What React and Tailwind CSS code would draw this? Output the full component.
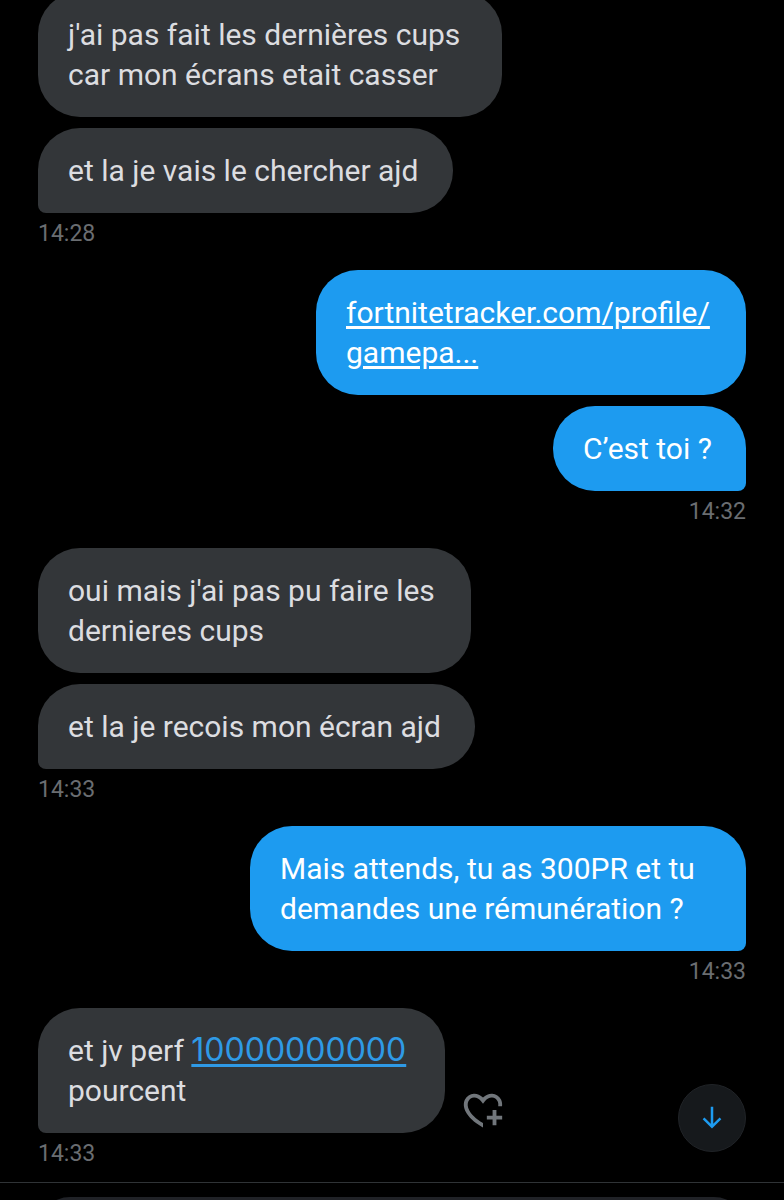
import React from "react";

const groups = [
  {
    mine: false,
    time: "14:28",
    bubbles: [
      { width: "w-[464px]", content: "j'ai pas fait les dernières cups car mon écrans etait casser" },
      { width: "w-[415px]", content: "et la je vais le chercher ajd" },
    ],
  },
  {
    mine: true,
    time: "14:32",
    bubbles: [
      {
        width: "w-[430px]",
        content: (
          <a href="#profile" className="underline decoration-[3px] underline-offset-3">
            fortnitetracker.com/profile/
            <wbr />
            gamepa...
          </a>
        ),
      },
      { width: "w-[193px]", content: "C’est toi ?" },
    ],
  },
  {
    mine: false,
    time: "14:33",
    bubbles: [
      { width: "w-[433px]", content: "oui mais j'ai pas pu faire les dernieres cups" },
      { width: "w-[437px]", content: "et la je recois mon écran ajd" },
    ],
  },
  {
    mine: true,
    time: "14:33",
    bubbles: [
      { width: "w-[496px]", content: "Mais attends, tu as 300PR et tu demandes une rémunération ?" },
    ],
  },
  {
    mine: false,
    time: "14:33",
    bubbles: [
      {
        width: "w-[407px]",
        reactable: true,
        content: (
          <>
            et jv perf{" "}
            <a
              href="#number"
              className="font-['Inter',sans-serif] text-[32px] leading-none text-[#2f9ae6] underline decoration-[3px] underline-offset-3"
            >
              10000000000
            </a>{" "}
            pourcent
          </>
        ),
      },
    ],
  },
];

function HeartPlusIcon() {
  return (
    <svg viewBox="0 0 24 24" className="size-[46px]" fill="currentColor" aria-hidden="true">
      <path d="M17 12v3h-2.998v2h3v3h2v-3h3v-2h-3.001v-3H17zm-5 6.839c-3.871-2.34-6.053-4.639-7.127-6.609-1.112-2.04-1.031-3.7-.479-4.82.561-1.13 1.667-1.84 2.91-1.91 1.222-.06 2.68.51 3.892 2.16l.806 1.09.805-1.09c1.211-1.65 2.668-2.22 3.89-2.16 1.242.07 2.347.78 2.908 1.91.334.677.49 1.554.321 2.59h2.011c.153-1.283-.039-2.469-.539-3.48-.887-1.79-2.647-2.91-4.601-3.01-1.65-.09-3.367.56-4.796 2.01-1.43-1.45-3.147-2.1-4.798-2.01-1.954.1-3.714 1.22-4.601 3.01-.896 1.81-.846 4.17.514 6.67 1.353 2.48 4.003 5.12 8.382 7.67l.502.299v-2.32z" />
    </svg>
  );
}

function ArrowDownIcon() {
  return (
    <svg viewBox="0 0 24 24" className="size-[30px]" fill="currentColor" aria-hidden="true">
      <path d="M13 3v13.59l5.043-5.05 1.414 1.42L12 20.41l-7.457-7.45 1.414-1.42L11 16.59V3h2z" />
    </svg>
  );
}

function Bubble({ mine, last, width, reactable, content }) {
  const tone = mine ? "bg-[#1d9bf0] text-white" : "bg-[#333639] text-[#dcdde0]";
  const tail = last ? (mine ? "rounded-br-lg" : "rounded-bl-lg") : "";
  return (
    <div className="flex max-w-full items-end gap-[15px]">
      <p
        className={`max-w-full rounded-[42px] px-[30px] pt-[23px] pb-[22px] text-[30px] leading-[40px] ${width} ${tone} ${tail}`}
      >
        {content}
      </p>
      {reactable && (
        <button type="button" aria-label="Ajouter une réaction" className="shrink-0 text-[#71767b]">
          <HeartPlusIcon />
        </button>
      )}
    </div>
  );
}

function Group({ mine, time, bubbles }) {
  return (
    <section className={`flex flex-col ${mine ? "items-end" : "items-start"}`}>
      <div className={`flex max-w-full flex-col gap-[11px] ${mine ? "items-end" : "items-start"}`}>
        {bubbles.map((b, i) => (
          <Bubble key={i} mine={mine} last={i === bubbles.length - 1} {...b} />
        ))}
      </div>
      <time className="pt-[7px] text-[23px] leading-[28px] text-[#6a6d71]">{time}</time>
    </section>
  );
}

export default function App() {
  return (
    <div className="flex h-screen flex-col overflow-hidden bg-black font-['Roboto',sans-serif]">
      <div className="relative flex min-h-0 flex-1 flex-col">
        <main className="flex min-h-0 flex-1 flex-col justify-end gap-[22px] overflow-hidden px-[38px] pb-[14px]">
          {groups.map((g, i) => (
            <Group key={i} {...g} />
          ))}
        </main>
        <button
          type="button"
          aria-label="Aller au dernier message"
          className="absolute right-[38px] bottom-[30px] flex size-[68px] items-center justify-center rounded-full border border-[#202327] bg-[#16191c] text-[#1d9bf0]"
        >
          <ArrowDownIcon />
        </button>
      </div>
      <footer className="h-[18px] shrink-0 overflow-hidden border-t border-[#2f3336] px-[38px] pt-[14px]">
        <input
          type="text"
          aria-label="Message"
          className="h-[72px] w-full rounded-[32px] bg-[#202227] px-[30px] text-[30px] text-white outline-none"
        />
      </footer>
    </div>
  );
}
